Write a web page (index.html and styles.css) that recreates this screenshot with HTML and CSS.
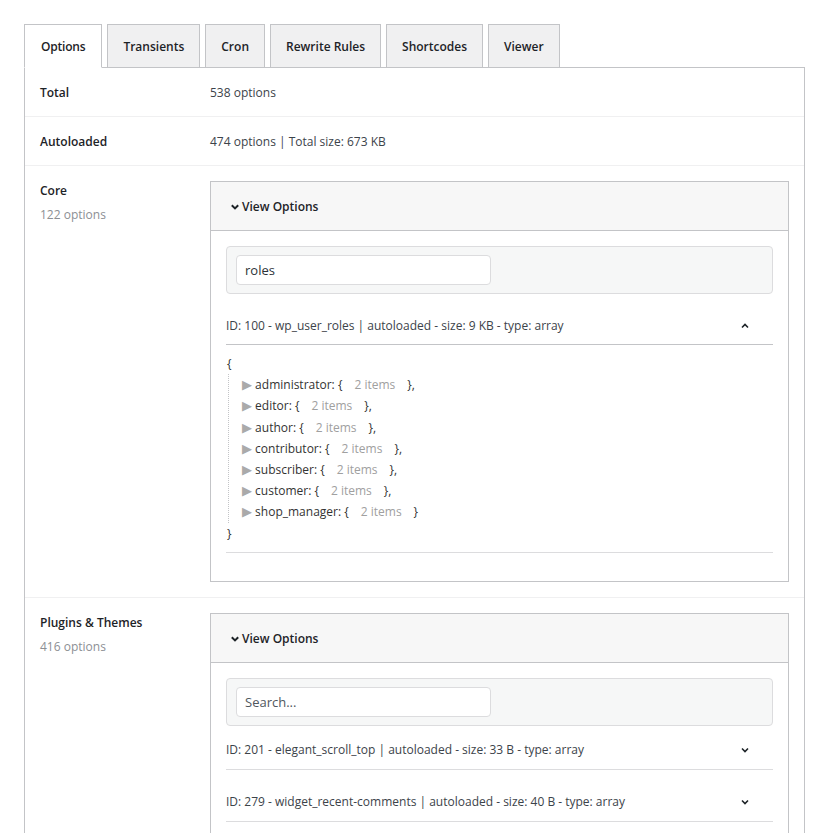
FILE: index.html
```html
<!DOCTYPE html>
<html lang="en">

<head>
  <meta charset="UTF-8">
  <title>Options</title>
  <link rel="stylesheet" href="styles.css">
</head>

<body>
  <div class="wrap">
    <nav class="tabs">
      <a class="tab active">Options</a>
      <a class="tab">Transients</a>
      <a class="tab">Cron</a>
      <a class="tab">Rewrite Rules</a>
      <a class="tab">Shortcodes</a>
      <a class="tab">Viewer</a>
    </nav>

    <div class="panel">
      <div class="row simple">
        <div class="label">Total</div>
        <div class="value text">538 options</div>
      </div>
      <div class="row simple">
        <div class="label">Autoloaded</div>
        <div class="value text">474 options | Total size: 673 KB</div>
      </div>

      <div class="row">
        <div class="label">Core<span class="sub">122 options</span></div>
        <div class="value">
          <div class="box">
            <div class="box-head">
              <svg class="chev" width="10" height="10" viewBox="0 0 10 10"><path d="M1.8 3.2 L5 6.4 L8.2 3.2" /></svg>
              View Options
            </div>
            <div class="box-body">
              <div class="search"><input type="text" value="roles" placeholder="Search..."></div>
              <div class="opt open first">
                <div class="opt-head">
                  <span>ID: 100 - wp_user_roles | autoloaded - size: 9 KB - type: array</span>
                  <svg class="mini" width="8" height="8" viewBox="0 0 8 8"><path d="M1 5.5 L4 2.5 L7 5.5" /></svg>
                </div>
                <div class="json">
                  <div>{</div>
                  <div class="json-children">
                    <div><span class="tri">&#9654;</span> administrator: {<span class="count">2 items</span>},</div>
                    <div><span class="tri">&#9654;</span> editor: {<span class="count">2 items</span>},</div>
                    <div><span class="tri">&#9654;</span> author: {<span class="count">2 items</span>},</div>
                    <div><span class="tri">&#9654;</span> contributor: {<span class="count">2 items</span>},</div>
                    <div><span class="tri">&#9654;</span> subscriber: {<span class="count">2 items</span>},</div>
                    <div><span class="tri">&#9654;</span> customer: {<span class="count">2 items</span>},</div>
                    <div><span class="tri">&#9654;</span> shop_manager: {<span class="count">2 items</span>}</div>
                  </div>
                  <div>}</div>
                </div>
              </div>
            </div>
          </div>
        </div>
      </div>

      <div class="row">
        <div class="label">Plugins &amp; Themes<span class="sub">416 options</span></div>
        <div class="value">
          <div class="box">
            <div class="box-head">
              <svg class="chev" width="10" height="10" viewBox="0 0 10 10"><path d="M1.8 3.2 L5 6.4 L8.2 3.2" /></svg>
              View Options
            </div>
            <div class="box-body">
              <div class="search"><input type="text" placeholder="Search..."></div>
              <div class="opt">
                <div class="opt-head">
                  <span>ID: 201 - elegant_scroll_top | autoloaded - size: 33 B - type: array</span>
                  <svg class="mini" width="8" height="8" viewBox="0 0 8 8"><path d="M1 2.5 L4 5.5 L7 2.5" /></svg>
                </div>
              </div>
              <div class="opt">
                <div class="opt-head">
                  <span>ID: 279 - widget_recent-comments | autoloaded - size: 40 B - type: array</span>
                  <svg class="mini" width="8" height="8" viewBox="0 0 8 8"><path d="M1 2.5 L4 5.5 L7 2.5" /></svg>
                </div>
              </div>
            </div>
          </div>
        </div>
      </div>
    </div>
  </div>
</body>

</html>
```

FILE: styles.css
```css
* {
  box-sizing: border-box;
}

body {
  margin: 0;
  padding: 24px 24px 0;
  background: #fff;
  color: #3c434a;
  font-family: 'Open Sans', Arial, sans-serif;
  font-size: 12px;
  line-height: 18px;
}

.tabs {
  display: flex;
  gap: 5px;
  margin-bottom: -1px;
}

.tab {
  display: block;
  padding: 13px 15px 11px;
  border: 1px solid #c3c4c7;
  background: #f0f0f1;
  color: #1d2327;
  font-weight: 600;
  font-size: 12px;
}

.tab.active {
  background: #fff;
  border-bottom-color: #fff;
  padding: 13px 16px 11px;
  letter-spacing: -0.2px;
}

.panel {
  border: 1px solid #c3c4c7;
}

.row {
  display: flex;
  padding: 15px;
  border-bottom: 1px solid #f0f0f1;
}

.row.simple {
  padding-bottom: 14px;
}

.row:last-child {
  border-bottom: 0;
}

.label {
  width: 170px;
  flex-shrink: 0;
  padding-top: 1px;
  color: #1d2327;
  font-weight: 600;
}

.label .sub {
  display: block;
  margin-top: 6px;
  color: #8c8f94;
  font-weight: 400;
}

.value {
  flex: 1;
}

.value.text {
  padding-top: 1px;
}

.box {
  border: 1px solid #c3c4c7;
}

.box-head {
  display: flex;
  align-items: center;
  gap: 2px;
  height: 49px;
  padding: 2px 19px 0;
  background: #f7f7f7;
  border-bottom: 1px solid #c3c4c7;
  color: #1d2327;
  font-weight: 600;
}

.chev path {
  fill: none;
  stroke: #1d2327;
  stroke-width: 2;
}

.box-body {
  padding: 15px 15px 20px;
}

.search {
  padding: 8px 9px;
  background: #f6f7f7;
  border: 1px solid #dcdcde;
  border-radius: 4px;
}

.search input {
  display: block;
  width: 255px;
  height: 30px;
  padding: 0 8px;
  border: 1px solid #dcdcde;
  border-radius: 4px;
  font-family: inherit;
  font-size: 13px;
  color: #2c3338;
}

.search input::placeholder {
  color: #50575e;
}

.opt {
  margin-bottom: 8px;
  border-bottom: 1px solid #dcdcde;
}

.opt.first {
  margin-top: 8px;
}

.opt-head {
  display: flex;
  align-items: center;
  justify-content: space-between;
  padding: 15px 24px 10px 0;
  color: #3c434a;
}

.mini path {
  fill: none;
  stroke: #1d2327;
  stroke-width: 1.6;
}

.opt.open .opt-head {
  border-bottom: 1px solid #c3c4c7;
  padding-bottom: 9px;
}

.json {
  padding: 8px 0 8px 1px;
  line-height: 21.2px;
  color: #333;
}

.json-children {
  margin-left: 1px;
  padding-left: 13px;
  border-left: 1px dotted #c3c4c7;
}

.tri {
  color: #aaa;
  font-size: 13px;
}

.count {
  padding: 0 12px;
  color: #a0a0a0;
}
```
